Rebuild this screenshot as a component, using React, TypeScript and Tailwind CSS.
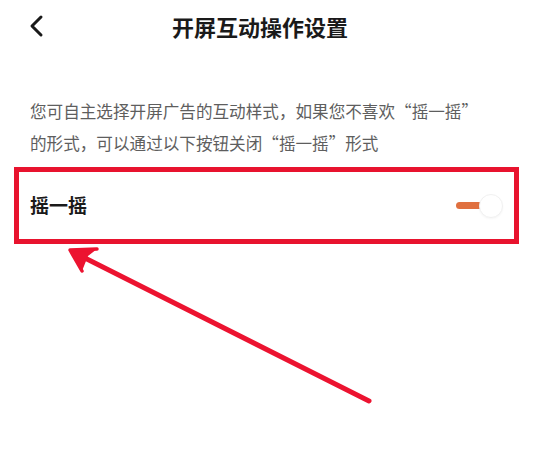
import React from "react";

export default function App() {
  return (
    <div
      className="relative w-[535px] h-[474px] bg-white overflow-hidden"
      style={{ fontFamily: '"Noto Sans CJK SC", "Noto Sans", sans-serif' }}
    >
      {/* header */}
      <div className="relative h-[52px] flex items-center">
        <div className="pl-[28px] flex items-center">
          <svg width="17" height="24" viewBox="0 0 17 24" fill="none">
            <path d="M13 3 L4 12 L13 21" stroke="#1a1a1a" strokeWidth="3" strokeLinecap="round" strokeLinejoin="round" />
          </svg>
        </div>
        <div className="absolute left-0 right-[15px] top-0 h-[52px] flex items-center justify-center pointer-events-none">
          <span className="text-[22px] font-bold text-[#1a1a1a] leading-none">开屏互动操作设置</span>
        </div>
      </div>

      {/* description */}
      <div className="mt-[43px] pl-[30px] pr-[10px] text-[16.6px] leading-[32px] text-[#5e5e5e]">
        <p>您可自主选择开屏广告的互动样式，如果您不喜欢“摇一摇”</p>
        <p>的形式，可以通过以下按钮关闭“摇一摇”形式</p>
      </div>

      {/* highlighted row */}
      <div className="mt-[8px] ml-[14px] w-[505px] h-[77px] border-[5px] border-[#e8132e] flex items-center justify-between pl-[11px] pr-[11px]">
        <span className="text-[19px] font-semibold text-[#1a1a1a]">摇一摇</span>
        <div className="flex items-center">
          <div className="w-[26px] h-[7px] rounded-full bg-[#e0703f]" />
          <div className="-ml-[3px] w-[24px] h-[24px] rounded-full bg-white border border-[#f1f1f1] shadow-[0_1px_2px_rgba(0,0,0,0.04)]" />
        </div>
      </div>

      {/* annotation arrow */}
      <svg className="absolute left-0 top-0 pointer-events-none" width="535" height="474" viewBox="0 0 535 474">
        <line x1="369" y1="401" x2="73" y2="252" stroke="#ec1330" strokeWidth="5" strokeLinecap="round" />
        <path d="M70 250 L97 249 L88 256 L82 271 Z" fill="#ec1330" />
        <path d="M97 249 L70 250 L82 271" stroke="#ec1330" strokeWidth="3.5" fill="none" strokeLinecap="round" strokeLinejoin="round" />
      </svg>
    </div>
  );
}
